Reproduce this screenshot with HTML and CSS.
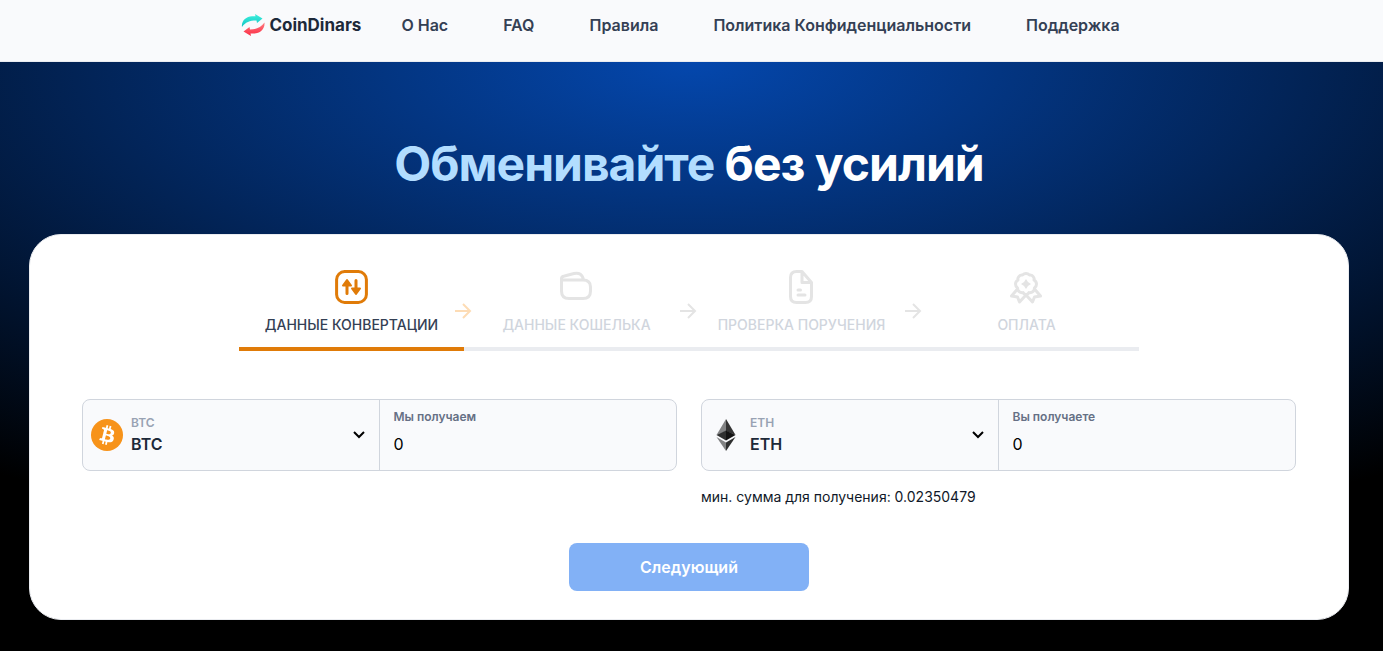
FILE: index.html
```html
<!DOCTYPE html>
<html lang="ru">
<head>
  <meta charset="UTF-8" />
  <meta name="viewport" content="width=device-width, initial-scale=1" />
  <title>CoinDinars</title>
  <link rel="stylesheet" href="styles.css">
</head>
<body>

  <header class="header">
    <a class="logo" href="#">
      <svg width="24" height="24" viewBox="0 0 24 24" aria-hidden="true">
        <defs>
          <linearGradient id="teal" x1="0" y1="0" x2="0" y2="1">
            <stop offset="0" stop-color="#3df0dc" />
            <stop offset="1" stop-color="#12c4c4" />
          </linearGradient>
          <linearGradient id="red" x1="0" y1="0" x2="0" y2="1">
            <stop offset="0" stop-color="#ff7d80" />
            <stop offset="1" stop-color="#fb2b44" />
          </linearGradient>
        </defs>
        <path fill="url(#teal)" d="M1 14C0 8 5 3.500 11 3.200L14.500 3.200L14 1L21.500 5.500L16 10L15.500 7.500C9 7.500 4.500 9 1 14Z" />
        <path fill="url(#red)" d="M23.500 9.500C24 16 19 20.300 13 20.500L9.500 20.500L10 23L2.500 18.500L8.500 14L9 16.500C15 16.500 20 14.500 23.500 9.500Z" />
      </svg>
      CoinDinars
    </a>
    <nav class="menu">
      <a href="#">О Нас</a>
      <a href="#">FAQ</a>
      <a href="#">Правила</a>
      <a href="#">Политика Конфиденциальности</a>
      <a href="#">Поддержка</a>
    </nav>
  </header>

  <main class="hero">
    <h1><span>Обменивайте</span> без усилий</h1>

    <form class="card">
      <ol class="steps">
        <li class="step active">
          <svg class="step-icon" width="36" height="36" viewBox="0 0 36 36" fill="none" stroke="currentColor" stroke-linecap="round" stroke-linejoin="round" aria-hidden="true">
            <rect x="2.600" y="2.600" width="29.800" height="30.800" rx="8" />
            <path stroke-width="3" d="M13 24.500V14M22 11.500V22" />
            <path fill="currentColor" stroke-width="2" d="M9 16.500L13 11L17 16.500ZM18 19.500L22 25L26 19.500Z" />
          </svg>
          <span class="step-name">ДАННЫЕ КОНВЕРТАЦИИ</span>
          <svg class="step-arrow" width="18" height="18" viewBox="0 0 18 18" fill="none" stroke="currentColor" stroke-width="2" aria-hidden="true">
            <path d="M1 9H16M9 2L16 9L9 16" />
          </svg>
        </li>
        <li class="step">
          <svg class="step-icon" width="36" height="36" viewBox="0 0 36 36" fill="none" stroke="currentColor" stroke-linecap="round" stroke-linejoin="round" aria-hidden="true">
            <path d="M2.500 11H24Q31.500 11 31.500 18V22Q31.500 29.500 24 29.500H10Q2.500 29.500 2.500 22V9.500Q2.500 7.500 5.500 7L15 4.500Q23 2.800 24.500 11" />
          </svg>
          <span class="step-name">ДАННЫЕ КОШЕЛЬКА</span>
          <svg class="step-arrow" width="18" height="18" viewBox="0 0 18 18" fill="none" stroke="currentColor" stroke-width="2" aria-hidden="true">
            <path d="M1 9H16M9 2L16 9L9 16" />
          </svg>
        </li>
        <li class="step">
          <svg class="step-icon" width="36" height="36" viewBox="0 0 36 36" fill="none" stroke="currentColor" stroke-linecap="round" stroke-linejoin="round" aria-hidden="true">
            <path d="M18 2.500H12.500Q6.500 2.500 6.500 8.500V27.500Q6.500 33.500 12.500 33.500H21.500Q27.500 33.500 27.500 27.500V13.500ZM18 2.500V13.500H27.500M14 21H16.500M14 26H21" />
          </svg>
          <span class="step-name">ПРОВЕРКА ПОРУЧЕНИЯ</span>
          <svg class="step-arrow" width="18" height="18" viewBox="0 0 18 18" fill="none" stroke="currentColor" stroke-width="2" aria-hidden="true">
            <path d="M1 9H16M9 2L16 9L9 16" />
          </svg>
        </li>
        <li class="step">
          <svg class="step-icon" width="36" height="36" viewBox="0 0 36 36" fill="none" stroke="currentColor" stroke-linejoin="round" aria-hidden="true">
            <path d="M17 4.500Q19 4.500 20.500 6Q23 5.500 24.500 8Q25.500 9.500 25 11Q27.500 12.500 27.500 15Q27.500 17.500 25.500 19Q25.500 22 23 23.200Q21 24 20 23.500Q19 25.500 17 25.500Q15 25.500 14 23.500Q13 24 11 23.200Q8.500 22 8.500 19Q6.500 17.500 6.500 15Q6.500 12.500 9 11Q8.500 9.500 9.500 8Q11 5.500 13.500 6Q15 4.500 17 4.500Z" />
            <path d="M8.500 20L2.500 27L8.500 28L10.500 33L17 26L23.500 33L25.500 28L31.500 27L25.500 20" />
            <path fill="currentColor" stroke="none" d="M17 10Q18.500 13.500 22 15Q18.500 16.500 17 20Q15.500 16.500 12 15Q15.500 13.500 17 10Z" />
          </svg>
          <span class="step-name">ОПЛАТА</span>
        </li>
      </ol>

      <div class="exchange">
        <div class="side">
          <div class="box">
            <button class="coin" type="button">
              <svg width="32" height="32" viewBox="0 0 32 32" aria-hidden="true">
                <circle cx="16" cy="16" r="16" fill="#f7931a" />
                <path fill="#fff" d="M23.189 14.020c.314-2.096-1.283-3.223-3.465-3.975l.708-2.840-1.728-.430-.690 2.765c-.454-.114-.920-.220-1.385-.326l.695-2.783L15.596 6l-.708 2.839c-.376-.086-.746-.170-1.104-.260l.002-.009-2.384-.595-.460 1.846s1.283.294 1.256.312c.700.175.826.638.805 1.006l-.806 3.235c.048.012.110.030.180.057l-.183-.045-1.130 4.532c-.086.212-.303.531-.793.410.018.025-1.256-.313-1.256-.313l-.858 1.978 2.250.561c.418.105.828.215 1.231.318l-.715 2.872 1.727.430.708-2.840c.472.127.930.245 1.378.357l-.706 2.828 1.728.430.715-2.866c2.948.558 5.164.333 6.097-2.333.752-2.146-.037-3.385-1.588-4.192 1.130-.260 1.980-1.003 2.207-2.538zm-3.950 5.538c-.533 2.147-4.148.986-5.320.695l.950-3.805c1.172.293 4.929.872 4.370 3.110zm.535-5.569c-.487 1.953-3.495.960-4.470.717l.860-3.450c.975.243 4.118.696 3.610 2.733z" />
              </svg>
              <span class="coin-text">
                <span class="coin-net">BTC</span>
                <span class="coin-name">BTC</span>
              </span>
              <svg class="chevron" width="14" height="10" viewBox="0 0 14 10" fill="none" stroke="#000" stroke-width="2" aria-hidden="true">
                <path d="M2 2L7 7L12 2" />
              </svg>
            </button>
            <div class="amount">
              <label for="give">Мы получаем</label>
              <input type="text" id="give" value="0" inputmode="decimal" />
            </div>
          </div>
        </div>

        <div class="side">
          <div class="box">
            <button class="coin" type="button">
              <svg width="32" height="32" viewBox="0 0 32 32" aria-hidden="true">
                <path fill="#828384" d="M16 0L6.500 16L16 12Z" />
                <path fill="#343434" d="M16 0L25.500 16L16 12Z" />
                <path fill="#2f3030" d="M16 11.500L6.500 16L16 21.500Z" />
                <path fill="#131313" d="M16 11.500L25.500 16L16 21.500Z" />
                <path fill="#828384" d="M6.500 18L16 23.500V32Z" />
                <path fill="#2f3030" d="M25.500 18L16 23.500V32Z" />
              </svg>
              <span class="coin-text">
                <span class="coin-net">ETH</span>
                <span class="coin-name">ETH</span>
              </span>
              <svg class="chevron" width="14" height="10" viewBox="0 0 14 10" fill="none" stroke="#000" stroke-width="2" aria-hidden="true">
                <path d="M2 2L7 7L12 2" />
              </svg>
            </button>
            <div class="amount">
              <label for="get">Вы получаете</label>
              <input type="text" id="get" value="0" inputmode="decimal" />
            </div>
          </div>
          <p class="hint">мин. сумма для получения: 0.02350479</p>
        </div>
      </div>

      <button class="next" type="submit" disabled>Следующий</button>
    </form>
  </main>

</body>
</html>
```

FILE: styles.css
```css
* {
  margin: 0;
  padding: 0;
  box-sizing: border-box;
}
body {
  min-height: 100vh;
  display: flex;
  flex-direction: column;
  background: #000;
  color: #1d2939;
  font-family: Inter, "Noto Sans", sans-serif;
  font-size: 16px;
  line-height: 24px;
}
a {
  color: inherit;
  text-decoration: none;
}
button, input {
  font: inherit;
  color: inherit;
  border: none;
  background: none;
}

/* Header */
.header {
  display: flex;
  justify-content: center;
  gap: 40px;
  padding: 13px 22px 24px 0;
  background: #f9fafc;
  border-bottom: 1px solid #eaecf0;
}
.logo {
  display: flex;
  align-items: center;
  gap: 4px;
  font-size: 17px;
  font-weight: 700;
}
.menu {
  display: flex;
  gap: 55px;
  font-weight: 600;
  color: #344054;
}

/* Hero */
.hero {
  flex: 1;
  padding: 72px 34px 31px 29px;
  background: radial-gradient(88% 85% at 50% 0, #0447ad, #000);
}
h1 {
  margin-bottom: 40px;
  color: #fff;
  font-size: 48px;
  line-height: 60px;
  font-weight: 700;
  letter-spacing: -1px;
  text-align: center;
}
h1 span {
  color: #b2ddff;
}

.card {
  max-width: 1320px;
  margin: 0 auto;
  padding: 34px 52px 28px;
  background: #fff;
  border: 1px solid #eaecf0;
  border-radius: 32px;
}

/* Steps */
.steps {
  display: flex;
  max-width: 900px;
  margin: 0 auto 48px;
  list-style: none;
}
.step {
  position: relative;
  flex: 1;
  display: flex;
  flex-direction: column;
  align-items: center;
  gap: 8px;
  padding-bottom: 10px;
  border-bottom: 4px solid #eaecf0;
  color: #e4e4e4;
}
.step.active {
  color: #e07b08;
  border-color: #e07b08;
}
.step-icon {
  stroke-width: 3px;
}
.step-name {
  color: #d0d5dd;
  font-size: 14px;
  font-weight: 500;
}
.active .step-name {
  color: #344054;
}
.step-arrow {
  position: absolute;
  right: -8px;
  top: 33px;
}
.active .step-arrow {
  color: #fddcb5;
}

/* Exchange fields */
.exchange {
  display: grid;
  grid-template-columns: 1fr 1fr;
  gap: 24px;
  margin-bottom: 34px;
}
.box {
  display: grid;
  grid-template-columns: 1fr 1fr;
  height: 72px;
  background: #f9fafc;
  border: 1px solid #d0d5dd;
  border-radius: 8px;
}
.coin {
  display: flex;
  align-items: center;
  gap: 8px;
  padding: 0 13px 0 8px;
  border-right: 1px solid #d0d5dd;
  text-align: left;
  cursor: pointer;
}
.coin-text {
  flex: 1;
  display: flex;
  flex-direction: column;
}
.coin-net {
  color: #98a2b3;
  font-size: 12px;
  line-height: 18px;
  font-weight: 600;
}
.coin-name {
  font-weight: 600;
}
.amount {
  display: flex;
  flex-direction: column;
  gap: 6px;
  padding: 8px 14px;
}
.amount label {
  color: #667085;
  font-size: 12px;
  line-height: 18px;
  font-weight: 600;
}
.amount input {
  width: 100%;
  color: #000;
  outline: none;
}
.hint {
  margin-top: 14px;
  color: #101828;
  font-size: 14px;
}

.next {
  display: block;
  width: 240px;
  height: 48px;
  margin: 0 auto;
  border-radius: 8px;
  background: #82b1f6;
  color: #fff;
  font-weight: 600;
}
```
